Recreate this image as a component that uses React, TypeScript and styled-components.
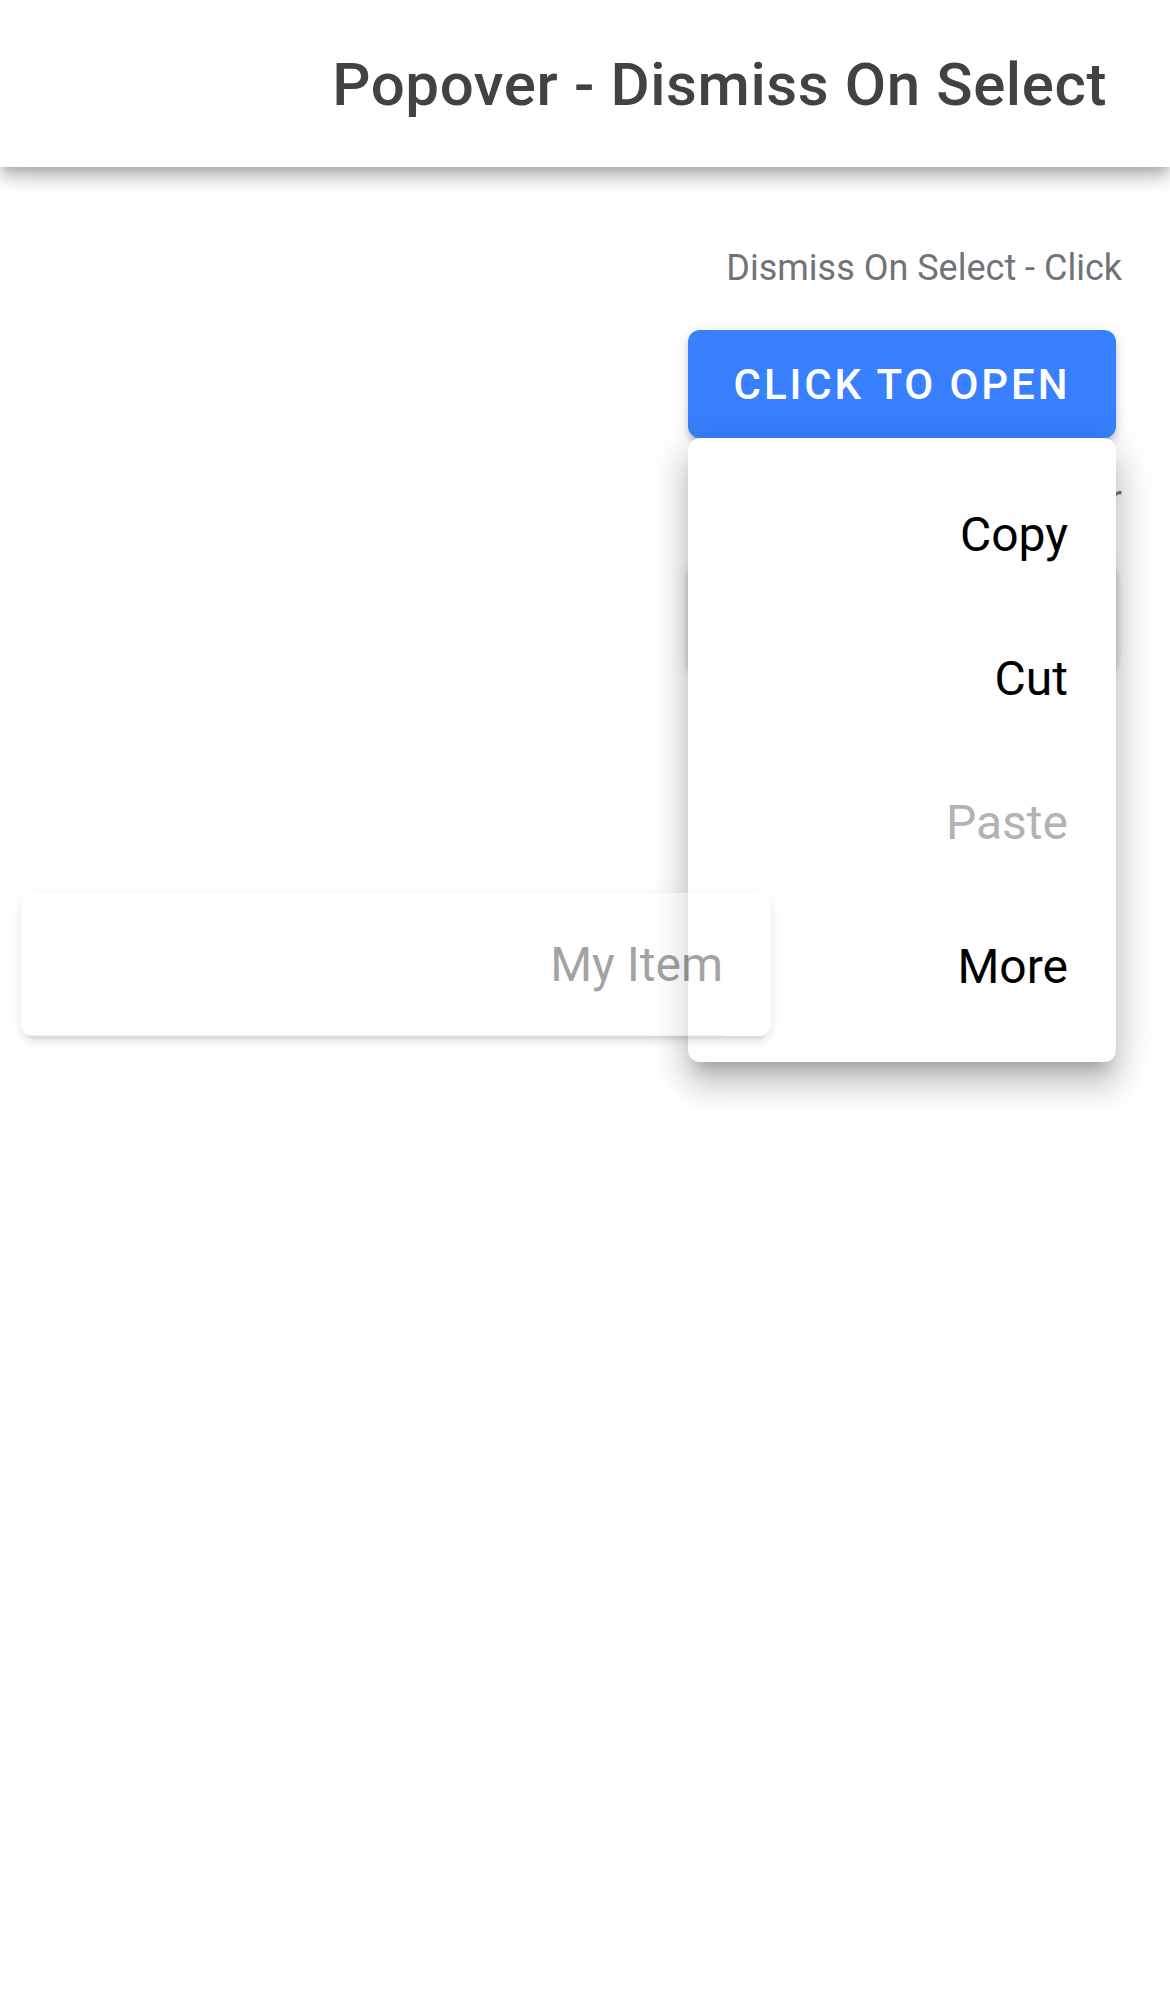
import React from "react";
import styled, { createGlobalStyle } from "styled-components";

const GlobalStyle = createGlobalStyle`
  html, body {
    margin: 0;
    padding: 0;
    background: #ffffff;
    font-family: Roboto, "Noto Sans", "Liberation Sans", sans-serif;
    -webkit-font-smoothing: antialiased;
  }
  * { box-sizing: border-box; }
`;

const Page = styled.div`
  position: relative;
  min-height: 1992px;
  background: #ffffff;
`;

const Header = styled.header`
  position: relative;
  z-index: 5;
  height: 167px;
  display: flex;
  align-items: center;
  justify-content: flex-end;
  padding: 2px 63px 0 60px;
  background: #ffffff;
  box-shadow: 0 6px 12px -3px rgba(0, 0, 0, 0.2), 0 12px 15px 0 rgba(0, 0, 0, 0.14),
    0 3px 30px 0 rgba(0, 0, 0, 0.12);
`;

const Title = styled.h1`
  margin: 0;
  font-size: 60px;
  font-weight: 500;
  letter-spacing: 0.6px;
  color: #424242;
  line-height: normal;
`;

const Content = styled.main`
  display: flex;
  flex-direction: column;
  align-items: flex-end;
  padding: 80px 48px 0 0;
`;

const Section = styled.section`
  display: flex;
  flex-direction: column;
  align-items: flex-end;
  margin-bottom: 40px;
`;

const Label = styled.div`
  font-size: 36px;
  line-height: 42px;
  color: #707378;
  margin-bottom: 41px;
`;

const Anchor = styled.div`
  position: relative;
  margin-right: 6px;
`;

const Button = styled.button`
  width: 428px;
  height: 108px;
  display: flex;
  align-items: center;
  justify-content: center;
  border: none;
  border-radius: 12px;
  background: #3880ff;
  color: #ffffff;
  font-family: Roboto, "Noto Sans", sans-serif;
  font-size: 42px;
  font-weight: 500;
  letter-spacing: 2.9px;
  text-transform: uppercase;
  box-shadow: 0 9px 3px -6px rgba(0, 0, 0, 0.2), 0 6px 6px 0 rgba(0, 0, 0, 0.14),
    0 3px 15px 0 rgba(0, 0, 0, 0.12);
  padding: 0;
`;

const Popover = styled.div`
  position: absolute;
  z-index: 3;
  top: 100%;
  right: 0;
  width: 428px;
  padding: 24px 0;
  background: #ffffff;
  border-radius: 12px;
  box-shadow: 0 15px 15px -9px rgba(0, 0, 0, 0.2), 0 24px 30px 3px rgba(0, 0, 0, 0.14),
    0 9px 42px 6px rgba(0, 0, 0, 0.12);
  display: flex;
  flex-direction: column;
`;

const MenuItem = styled.div<{ $disabled?: boolean }>`
  height: 144px;
  display: flex;
  align-items: center;
  justify-content: flex-end;
  padding-right: 48px;
  font-size: 48px;
  color: ${(p) => (p.$disabled ? "#b3b3b3" : "#000000")};
`;

const Card = styled.div`
  position: relative;
  z-index: 4;
  align-self: flex-start;
  margin: 184px 0 0 21px;
  width: 750px;
  border-radius: 12px;
  overflow: hidden;
  background: #ffffff;
  opacity: 0.4;
  box-shadow: 0 9px 3px -6px rgba(0, 0, 0, 0.2), 0 6px 6px 0 rgba(0, 0, 0, 0.14),
    0 3px 15px 0 rgba(0, 0, 0, 0.12);
`;

const CardItem = styled.div`
  height: 143px;
  display: flex;
  align-items: center;
  justify-content: flex-end;
  padding-right: 48px;
  font-size: 48px;
  color: #1c1c1c;
  position: relative;
  &::after {
    content: "";
    position: absolute;
    left: 0;
    right: 48px;
    bottom: 0;
    height: 1px;
    background: rgba(0, 0, 0, 0.13);
  }
`;

const menu = [
  { label: "Copy" },
  { label: "Cut" },
  { label: "Paste", disabled: true },
  { label: "More" },
];

export default function App() {
  return (
    <Page>
      <GlobalStyle />
      <Header>
        <Title>Popover - Dismiss On Select</Title>
      </Header>
      <Content>
        <Section>
          <Label>Dismiss On Select - Click</Label>
          <Anchor>
            <Button>Click to open</Button>
            <Popover>
              {menu.map((m) => (
                <MenuItem key={m.label} $disabled={m.disabled}>
                  {m.label}
                </MenuItem>
              ))}
            </Popover>
          </Anchor>
        </Section>
        <Section>
          <Label>Dismiss On Select - Hover</Label>
          <Anchor>
            <Button>Hover to open</Button>
          </Anchor>
        </Section>
        <Card>
          <CardItem>My Item</CardItem>
        </Card>
      </Content>
    </Page>
  );
}
